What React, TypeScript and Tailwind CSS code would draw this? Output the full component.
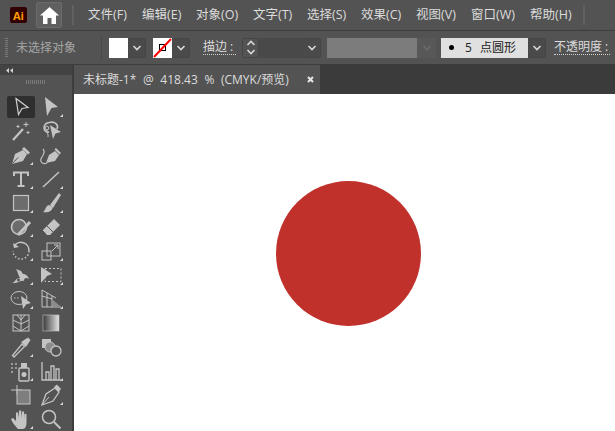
import { ReactNode } from "react";

const cjk = "font-['Open_Sans','Noto_Sans_CJK_SC',sans-serif]";

const menus = [
  { label: "文件(F)", w: "w-[54px]" },
  { label: "编辑(E)", w: "w-[54px]" },
  { label: "对象(O)", w: "w-[57px]" },
  { label: "文字(T)", w: "w-[54px]" },
  { label: "选择(S)", w: "w-[54px]" },
  { label: "效果(C)", w: "w-[55px]" },
  { label: "视图(V)", w: "w-[55px]" },
  { label: "窗口(W)", w: "w-[59px]" },
  { label: "帮助(H)", w: "w-[46px]" },
];

function Chevron({ color = "#d8d8d8", up = false }: { color?: string; up?: boolean }) {
  return (
    <svg width="10" height="6" viewBox="0 0 10 6" fill="none" stroke={color} strokeWidth="1.6">
      <path d={up ? "M1.5 5L5 1.5 8.5 5" : "M1.5 1L5 4.5 8.5 1"} />
    </svg>
  );
}

function Drop({ className = "" }: { className?: string }) {
  return (
    <div className={`flex h-[20px] items-center justify-center rounded-r-[2px] border border-l-0 border-[#464646] bg-[#4a4a4a] ${className}`}>
      <Chevron />
    </div>
  );
}

const c = "#c4c4c4";

// each tool icon is drawn on a 24x24 box
const tools: { icon: ReactNode; corner?: boolean }[] = [
  { icon: <path d="M7 3.500L19 12.500 13 13.500 9.500 19.500z" fill="none" stroke="#d0d0d0" strokeWidth="1.2" /> },
  { icon: <path d="M6 2L19 12 12.500 13 8 21z" fill={c} />, corner: true },
  {
    icon: (
      <>
        <path d="M4 21L14 10" stroke={c} strokeWidth="2.2" />
        <path d="M17 3v5M14.500 5.500h5M9 6v3M7.500 7.500h3M19 12v3M17.500 13.500h3" stroke={c} strokeWidth="1" />
      </>
    ),
  },
  {
    icon: (
      <>
        <path d="M10 13C4 14 3 5 10 3.500 16 2 20 6 18 10" fill="none" stroke={c} strokeWidth="1.600" />
        <path d="M11 6L22 13 16.500 14.500 14 20z" fill={c} />
        <circle cx="8" cy="9" r="1.800" fill="none" stroke={c} />
        <path d="M8 11C7 14 10 15 9 18" fill="none" stroke={c} />
      </>
    ),
  },
  {
    icon: (
      <>
        <path d="M3 21L6 11 14 7 18 11 14 18z" fill={c} />
        <path d="M15 4L21 9.500 19 11.500 13 6z" fill={c} />
        <path d="M3.500 20.500L9 14.500" stroke="#535353" />
      </>
    ),
    corner: true,
  },
  {
    icon: (
      <>
        <path d="M7 20L10 12 16 8 20 12 16 18z" fill={c} />
        <path d="M17 5L22 10 20.500 11.500 15.500 6.500z" fill={c} />
        <path d="M8 20C3 22 0 18 3 14 5 11 6 8 4 6" fill="none" stroke={c} strokeWidth="1.200" />
      </>
    ),
  },
  {
    icon: <path d="M5 9V5.500H19V9M12 5.500V19M8.500 19H15.500" fill="none" stroke={c} strokeWidth="2" />,
    corner: true,
  },
  { icon: <path d="M4 20L20 5" stroke={c} strokeWidth="1.500" />, corner: true },
  {
    icon: <rect x="4.500" y="4.500" width="15" height="15" fill="#6c6c6c" stroke={c} strokeWidth="1.200" />,
    corner: true,
  },
  {
    icon: (
      <>
        <path d="M11 14L20 2 22 4 14 17z" fill={c} />
        <path d="M10 14C6 15 7 19 4 21 9 22 14 20 13.500 16z" fill={c} />
      </>
    ),
    corner: true,
  },
  {
    icon: (
      <>
        <circle cx="10" cy="12" r="7.500" fill="#6c6c6c" stroke={c} strokeWidth="1.600" />
        <path d="M9 20L21 7" stroke={c} strokeWidth="3" />
      </>
    ),
    corner: true,
  },
  {
    icon: (
      <>
        <path d="M4 15L15 4 21 10 11 20H8z" fill={c} />
        <path d="M8 11L14.500 17.500" stroke="#535353" />
        <path d="M4 15L9 20" stroke={c} />
      </>
    ),
    corner: true,
  },
  {
    icon: (
      <>
        <path d="M5 7.500A8 8 0 0 1 20 12" fill="none" stroke={c} strokeWidth="1.500" />
        <path d="M20 12A8 8 0 0 1 4 12" fill="none" stroke={c} strokeWidth="1.500" strokeDasharray="1.500 2" />
        <path d="M4 4l1 5 5-1z" fill={c} />
      </>
    ),
    corner: true,
  },
  {
    icon: (
      <>
        <rect x="3" y="12" width="9" height="9" fill="none" stroke={c} />
        <rect x="8" y="4" width="13" height="13" fill="none" stroke={c} />
        <path d="M13 12L19 6M15 6h4v4" fill="none" stroke={c} />
      </>
    ),
    corner: true,
  },
  {
    icon: (
      <>
        <path d="M3 20C6 20 6 15 11 15 9 12 9 9 7 6L12 8 14 11C17 11 19 13 20 16 17 14 15 15 15 18 12 17 8 21 3 20z" fill={c} />
        <circle cx="9.500" cy="17" r="1.500" fill="#535353" />
      </>
    ),
    corner: true,
  },
  {
    icon: (
      <>
        <path d="M2 4L13 11 8 13 2 20z" fill={c} />
        <rect x="6" y="5.500" width="16" height="13" fill="none" stroke={c} strokeDasharray="2 2" />
      </>
    ),
    corner: true,
  },
  {
    icon: (
      <>
        <ellipse cx="10" cy="11" rx="8" ry="6.500" fill="none" stroke={c} />
        <path d="M5 11h6" stroke={c} strokeDasharray="1.500 1.500" />
        <path d="M12 9L22 16 17 17.500 14 22z" fill={c} />
      </>
    ),
    corner: true,
  },
  {
    icon: (
      <>
        <path d="M3 3L17 11M3 3V20H22M3 9L13 12M8 6V20M13 9V20" fill="none" stroke={c} />
        <path d="M14 13L21 19H14z" fill="#8c8c8c" />
      </>
    ),
    corner: true,
  },
  {
    icon: (
      <>
        <rect x="4" y="4" width="16" height="16" fill="none" stroke={c} />
        <path d="M4 9L12 13 20 9M4 15L12 20 20 15M12 4V20M8 4L12 9 16 4" fill="none" stroke={c} />
      </>
    ),
  },
  {
    icon: (
      <>
        <defs>
          <linearGradient id="gradTool" x1="0" x2="1" y1="0" y2="0">
            <stop offset="0" stopColor="#3a3a3a" />
            <stop offset="1" stopColor="#e4e4e4" />
          </linearGradient>
        </defs>
        <rect x="4" y="4" width="16" height="16" fill="url(#gradTool)" stroke={c} strokeWidth="0.600" />
      </>
    ),
  },
  {
    icon: (
      <>
        <path d="M5 22L3.500 20.500 13 9 15.500 11.500 5 22z" fill="none" stroke={c} strokeWidth="1.300" />
        <path d="M12 7L19 2.500 21.500 5 17 12z" fill={c} />
      </>
    ),
    corner: true,
  },
  {
    icon: (
      <>
        <rect x="3" y="4" width="9" height="9" fill={c} />
        <circle cx="11" cy="12" r="5" fill="#8c8c8c" stroke={c} />
        <circle cx="17" cy="16" r="5" fill="#535353" stroke={c} strokeWidth="1.300" />
      </>
    ),
  },
  {
    icon: (
      <>
        <path d="M2 4h2v2H2zM6 4h2v2H6zM2 8h2v2H2zM6 8h2v2H6zM2 12h2v2H2z" fill="#9a9a9a" />
        <rect x="10" y="9" width="10" height="13" rx="1" fill="none" stroke={c} strokeWidth="1.400" />
        <rect x="12" y="4" width="6" height="5" fill={c} />
        <circle cx="15" cy="15.500" r="2.500" fill={c} />
      </>
    ),
    corner: true,
  },
  {
    icon: <path d="M3 3V21H22M7 21V13H10V21M12 21V7H15V21M17 21V10H20V21" fill="none" stroke={c} strokeWidth="1.300" />,
    corner: true,
  },
  {
    icon: (
      <>
        <path d="M2 7H13M8 2V12" stroke={c} strokeWidth="1" />
        <rect x="8" y="7" width="13" height="14" fill="#7e7e7e" stroke={c} />
      </>
    ),
  },
  {
    icon: (
      <>
        <path d="M3 22L7 11 16 5 20 9 14 18z" fill="none" stroke={c} strokeWidth="1.300" />
        <path d="M15 4L18 1.500 22 6 19.500 9z" fill={c} />
        <path d="M3 22L10 14" stroke={c} />
      </>
    ),
    corner: true,
  },
  {
    icon: (
      <path
        d="M9 22C6 19 3 15 2 12L4 11 7 14V5.500L9 5.500 10 11V3.500H12L13 11V4.500H15L15.500 12V7H17.500V16C17.500 19 16 22 14 22z"
        fill={c}
      />
    ),
    corner: true,
  },
  {
    icon: (
      <>
        <circle cx="10" cy="10" r="6.500" fill="none" stroke={c} strokeWidth="1.500" />
        <path d="M15 15L21.500 21.500" stroke={c} strokeWidth="2" />
      </>
    ),
  },
];

export default function App() {
  return (
    <div className={`flex h-[431px] w-[615px] flex-col overflow-hidden bg-[#535353] text-[12px] text-[#dcdcdc] ${cjk}`}>
      {/* Menu bar */}
      <header className="flex h-[31px] shrink-0 items-center border-b border-[#3d3d3d]">
        <div className="ml-[10px] flex h-[16px] w-[17px] items-center justify-center rounded-[2px] bg-[#330000] text-[11px] font-bold leading-none text-[#ff9a00]">
          Ai
        </div>
        <div className="ml-[9px] flex h-[26px] w-[26px] items-center justify-center rounded-[2px] border border-[#6c6c6c] bg-[#606060]">
          <svg width="19" height="17" viewBox="0 0 19 17" fill="#fff">
            <path d="M9.500 0L19 8.500H16V17H11.500V11H7.500V17H3V8.500H0z" />
          </svg>
        </div>
        <div className="ml-[10px] h-[20px] w-[2px] bg-[#616161]" />
        <nav className="ml-[14px] flex text-[12.5px] whitespace-nowrap">
          {menus.map((m) => (
            <span key={m.label} className={m.w}>
              {m.label}
            </span>
          ))}
        </nav>
        <div className="ml-[7px] h-[20px] w-[2px] bg-[#616161]" />
      </header>

      {/* Control bar */}
      <div className="flex h-[34px] shrink-0 items-center border-b border-[#3d3d3d] whitespace-nowrap">
        <div className="ml-[5px] h-[20px] w-[3px] bg-[repeating-linear-gradient(#7a7a7a_0,#7a7a7a_1px,transparent_1px,transparent_2px)]" />
        <span className="ml-[8px] w-[60px] text-[#a6a6a6]">未选择对象</span>
        <div className="ml-[25px] h-[24px] w-px bg-[#484848]" />
        <div className="ml-[7px] h-[20px] w-[19px] bg-white" />
        <Drop className="w-[18px]" />
        <div className="relative ml-[7px] flex h-[20px] w-[19px] items-center justify-center overflow-hidden bg-white">
          <div className="h-[7px] w-[7px] border border-black" />
          <svg className="absolute inset-0" width="19" height="20" viewBox="0 0 19 20">
            <path d="M1 19L18 1" stroke="#f00" strokeWidth="2" />
          </svg>
        </div>
        <Drop className="w-[18px]" />
        <span className="ml-[13px] w-[33px] border-b border-dotted border-[#d0d0d0] leading-[14px]">描边 :</span>
        <div className="ml-[6px] flex h-[20px] w-[17px] flex-col items-center justify-center gap-[3px] rounded-l-[2px] border border-[#464646]">
          <Chevron up />
          <Chevron />
        </div>
        <div className="h-[20px] w-[44px] bg-[#494949]" />
        <Drop className="w-[18px]" />
        <div className="ml-[6px] h-[20px] w-[90px] bg-[#7c7c7c]" />
        <div className="flex h-[20px] w-[19px] items-center justify-center bg-[#585858]">
          <Chevron color="#6d6d6d" />
        </div>
        <div className="ml-[5px] flex h-[20px] w-[87px] items-center bg-[#e0e0e0] text-[#222]">
          <div className="ml-[8px] h-[5px] w-[5px] rounded-full bg-black" />
          <span className="ml-[11px]">5</span>
          <span className="ml-[8px]">点圆形</span>
        </div>
        <Drop className="w-[18px]" />
        <span className="ml-[8px] w-[56px] border-b border-dotted border-[#d0d0d0] leading-[14px]">不透明度 :</span>
      </div>

      <div className="flex min-h-0 flex-1">
        {/* Tools */}
        <aside className="flex w-[74px] shrink-0 flex-col border-r-2 border-[#3d3d3d]">
          <div className="flex h-[11px] items-center bg-[#434343] pl-[6px]">
            <svg width="7" height="5" viewBox="0 0 7 5" fill="#cfcfcf">
              <path d="M3 0v5L0 2.500zM7 0v5L4 2.500z" />
            </svg>
          </div>
          <div className="mx-auto mt-[5px] h-[4px] w-[20px] bg-[repeating-linear-gradient(90deg,#7a7a7a_0,#7a7a7a_1px,transparent_1px,transparent_2px)]" />
          <div className="mt-[11px] grid grid-cols-[30px_30px] pl-[6px]">
            {tools.map((t, i) => (
              <div
                key={i}
                className={`relative mx-px my-px flex h-[22px] w-[28px] items-center justify-center ${i === 0 ? "rounded-[2px] bg-[#2f2f2f]" : ""}`}
              >
                <svg className="shrink-0" width="24" height="24" viewBox="0 0 24 24">
                  {t.icon}
                </svg>
                {t.corner && (
                  <svg className="absolute right-[2px] bottom-px" width="3" height="3" viewBox="0 0 3 3" fill="#d8d8d8">
                    <path d="M3 0V3H0z" />
                  </svg>
                )}
              </div>
            ))}
          </div>
        </aside>

        {/* Document area */}
        <main className="flex min-w-0 flex-1 flex-col bg-[#3b3b3b]">
          <div className="flex h-[29px] shrink-0 items-end bg-[#3b3b3b]">
            <div className="flex h-[29px] w-[246px] items-center justify-between bg-[#535353] pr-[6px] pl-[9px] whitespace-nowrap">
              <span className="[word-spacing:3.5px]">未标题-1* @ 418.43 % (CMYK/预览)</span>
              <svg width="7" height="7" viewBox="0 0 7 7" stroke="#e8e8e8" strokeWidth="2">
                <path d="M1 1L6 6M6 1L1 6" />
              </svg>
            </div>
          </div>
          <div className="flex-1 bg-white pt-[87px] pl-[202px]">
            <div className="h-[145px] w-[145px] rounded-full bg-[#c1312c]" />
          </div>
        </main>
      </div>
    </div>
  );
}
